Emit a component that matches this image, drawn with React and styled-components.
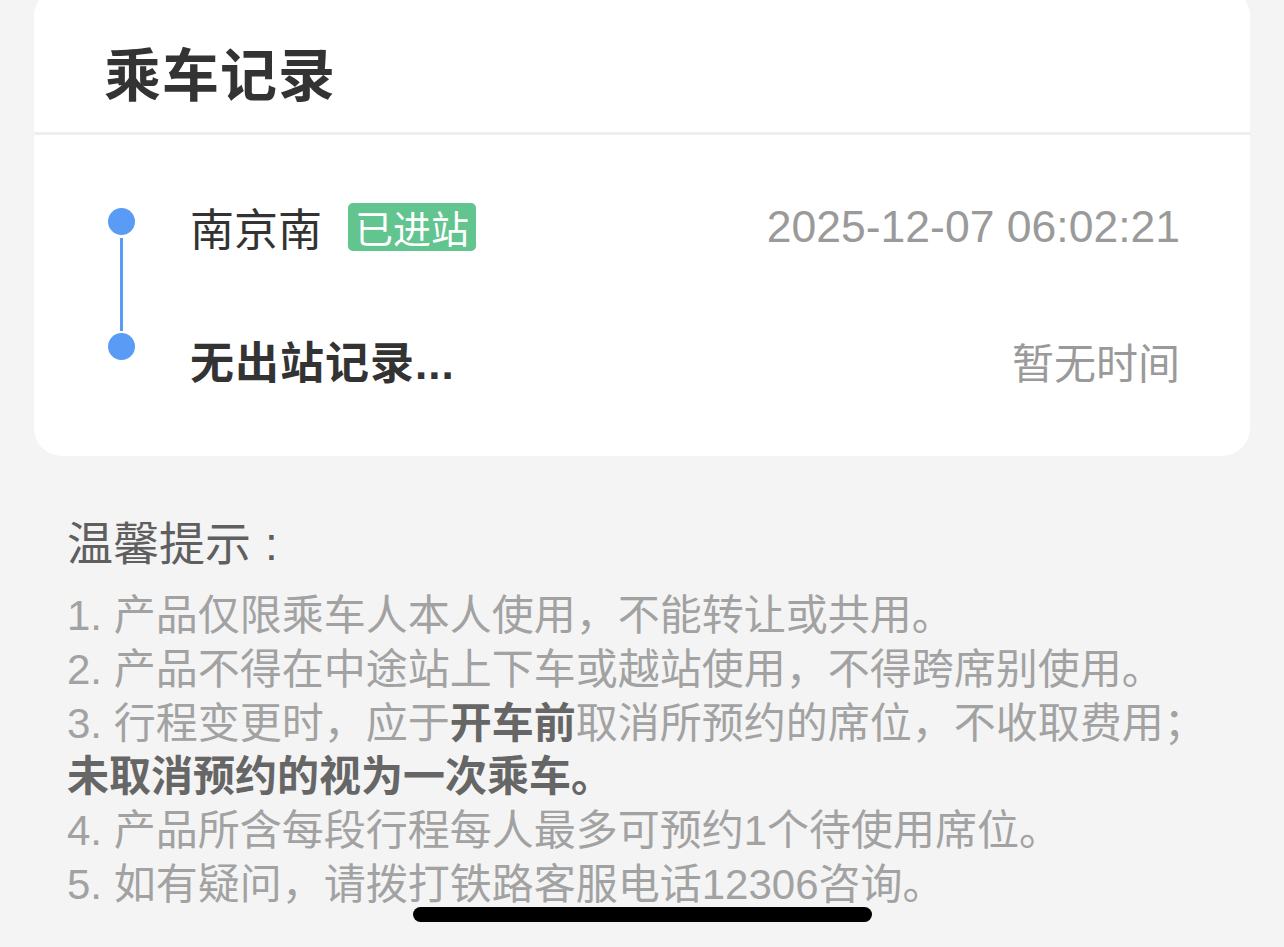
import React from "react";
import styled, { createGlobalStyle } from "styled-components";

const GlobalStyle = createGlobalStyle`
  html, body {
    margin: 0;
    padding: 0;
    background: #f4f4f4;
  }
  body {
    font-family: "Liberation Sans", "Noto Sans CJK SC", sans-serif;
    -webkit-font-smoothing: antialiased;
  }
`;

const Page = styled.div`
  min-height: 947px;
  background: #f4f4f4;
  padding: 0 34px;
  box-sizing: border-box;
  overflow: hidden;
`;

const Card = styled.section`
  margin-top: -12px;
  background: #ffffff;
  border-radius: 28px;
  overflow: hidden;
`;

const CardHeader = styled.header`
  padding: 44px 70px 22px;
  border-bottom: 3px solid #eeeeee;
`;

const Title = styled.h1`
  margin: 0;
  font-family: "Noto Sans CJK SC", sans-serif;
  font-size: 57px;
  line-height: 78px;
  font-weight: 700;
  color: #333333;
  letter-spacing: 1px;
`;

const CardBody = styled.div`
  padding: 67px 70px 71px 74px;
`;

const TimelineItem = styled.div`
  display: flex;
  align-items: stretch;
  height: ${(p) => (p.$last ? "auto" : "129px")};
`;

const Marker = styled.div`
  width: 27px;
  display: flex;
  flex-direction: column;
  align-items: center;
  padding-top: ${(p) => p.$offset}px;
`;

const Dot = styled.span`
  width: 27px;
  height: 27px;
  border-radius: 50%;
  background: #5a9cf5;
  flex: none;
`;

const Connector = styled.span`
  flex: 1;
  width: 3px;
  margin: 3px 0 0;
  background: #5a9cf5;
`;

const Content = styled.div`
  flex: 1;
  display: flex;
  align-items: center;
  justify-content: space-between;
  height: 50px;
  margin-left: 55px;
  padding-top: ${(p) => p.$top}px;
`;

const StationWrap = styled.div`
  display: flex;
  align-items: center;
`;

const Station = styled.span`
  font-family: "Liberation Sans", "Noto Sans CJK SC", sans-serif;
  font-size: 44px;
  font-weight: ${(p) => (p.$bold ? 700 : 400)};
  color: #333333;
  letter-spacing: ${(p) => (p.$bold ? "1px" : "0")};
`;

const Badge = styled.span`
  margin-left: 26px;
  height: 48px;
  padding: 0 7px;
  display: inline-flex;
  align-items: center;
  background: #62c48e;
  border-radius: 5px;
  color: #ffffff;
  font-family: "Noto Sans CJK SC", sans-serif;
  font-size: 38px;
  line-height: 48px;
`;

const Time = styled.span`
  font-family: "Liberation Sans", "Noto Sans CJK SC", sans-serif;
  font-size: ${(p) => p.$size}px;
  color: #9a9a9a;
`;

const Tips = styled.section`
  padding: 55px 33px 0;
`;

const TipsTitle = styled.h2`
  margin: 0;
  font-family: "Noto Sans CJK SC", sans-serif;
  font-weight: 400;
  font-size: 46px;
  line-height: 58px;
  color: #5f5f5f;
`;

const Colon = styled.span`
  font-family: "Liberation Sans", sans-serif;
  margin-left: 14px;
`;

const TipList = styled.div`
  margin-top: 16px;
`;

const Tip = styled.p`
  margin: 0;
  font-size: 42px;
  line-height: 53.8px;
  color: #a2a2a2;
  white-space: nowrap;
`;

const Strong = styled.b`
  font-weight: 700;
  color: #666666;
`;

const HomeIndicator = styled.div`
  position: fixed;
  left: 413px;
  top: 907px;
  width: 459px;
  height: 15px;
  border-radius: 8px;
  background: #000000;
`;

export default function App() {
  return (
    <>
      <GlobalStyle />
      <Page>
        <Card>
          <CardHeader>
            <Title>乘车记录</Title>
          </CardHeader>
          <CardBody>
            <TimelineItem>
              <Marker $offset={6}>
                <Dot />
                <Connector />
              </Marker>
              <Content $top={0}>
                <StationWrap>
                  <Station>南京南</Station>
                  <Badge>已进站</Badge>
                </StationWrap>
                <Time $size={44.5}>2025-12-07 06:02:21</Time>
              </Content>
            </TimelineItem>
            <TimelineItem $last>
              <Marker $offset={2}>
                <Dot />
              </Marker>
              <Content $top={4}>
                <Station $bold>无出站记录...</Station>
                <Time $size={42}>暂无时间</Time>
              </Content>
            </TimelineItem>
          </CardBody>
        </Card>
        <Tips>
          <TipsTitle>
            温馨提示<Colon>:</Colon>
          </TipsTitle>
          <TipList>
            <Tip>1. 产品仅限乘车人本人使用，不能转让或共用。</Tip>
            <Tip>2. 产品不得在中途站上下车或越站使用，不得跨席别使用。</Tip>
            <Tip>
              3. 行程变更时，应于<Strong>开车前</Strong>取消所预约的席位，不收取费用；
            </Tip>
            <Tip>
              <Strong>未取消预约的视为一次乘车。</Strong>
            </Tip>
            <Tip>4. 产品所含每段行程每人最多可预约1个待使用席位。</Tip>
            <Tip>5. 如有疑问，请拨打铁路客服电话12306咨询。</Tip>
          </TipList>
        </Tips>
        <HomeIndicator />
      </Page>
    </>
  );
}
